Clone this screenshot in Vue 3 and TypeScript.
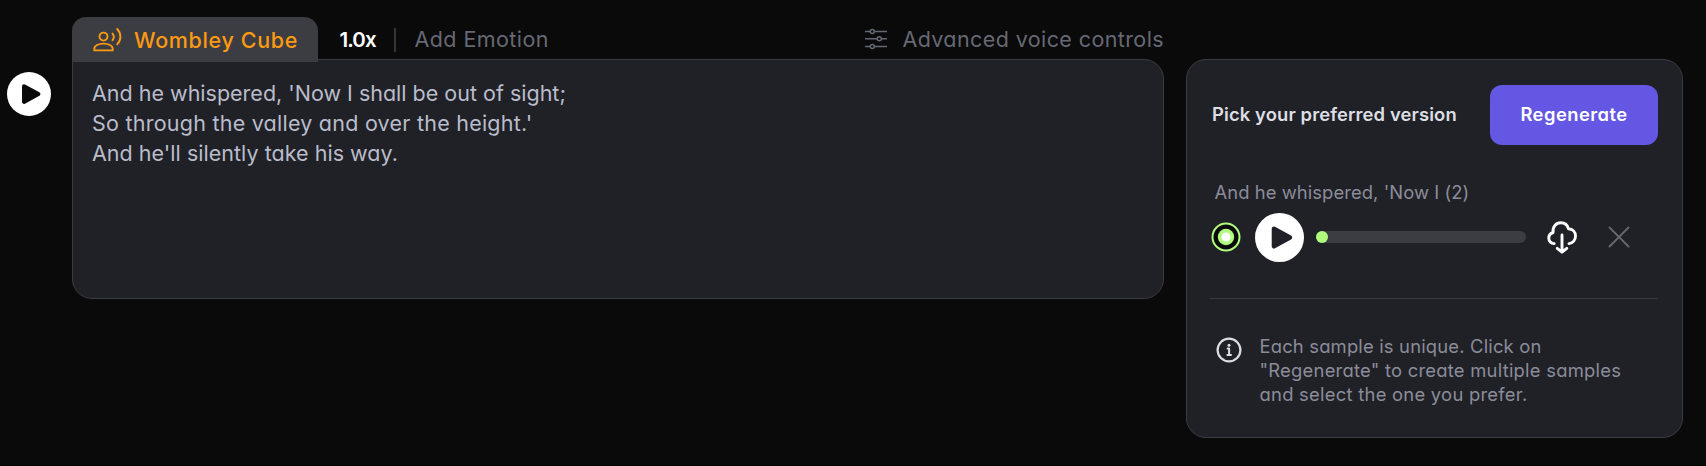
<script setup lang="ts">
interface Line {
  text: string
  cls: string
}

const script: Line[] = [
  { text: "And he whispered, 'Now I shall be out of sight;", cls: 'fit-a' },
  { text: "So through the valley and over the height.'", cls: 'fit-b' },
  { text: "And he'll silently take his way.", cls: 'fit-c' },
]

const hint: Line[] = [
  { text: 'Each sample is unique. Click on', cls: 'fit-d' },
  { text: '"Regenerate" to create multiple samples', cls: 'fit-e' },
  { text: 'and select the one you prefer.', cls: 'fit-f' },
]
</script>

<template>
  <main class="page">
    <button class="play play-main" aria-label="Play">
      <svg viewBox="0 0 44 44">
        <circle cx="22" cy="22" r="22" fill="#fff" />
        <path d="M17 14.2 31.4 22 17 29.9Z" fill="#0a0a0a" stroke="#0a0a0a" stroke-width="4" stroke-linejoin="round" />
      </svg>
    </button>

    <section class="editor">
      <header class="toolbar">
        <button class="tab">
          <svg class="voice" viewBox="0 0 30 28" fill="none" stroke="currentColor" stroke-width="1.9" stroke-linecap="round" stroke-linejoin="round">
            <circle cx="11.5" cy="10.6" r="4" />
            <path d="M2.3 24.4v-1.6c0-3.2 4.2-5.2 9.2-5.2s9.2 2 9.2 5.2v1.6z" />
            <path d="M20.5 7.6q2.7 3.3 0 6.6M25.2 3c4.3 4.5 4.3 10.8 0 15.3" />
          </svg>
          <span>Wombley Cube</span>
        </button>
        <span class="speed">1.0x</span>
        <span class="bar"></span>
        <span class="emotion">Add Emotion</span>
        <span class="advanced">
          <svg class="sliders" viewBox="0 0 26 26" fill="none" stroke="currentColor" stroke-width="1.5">
            <path d="M2 5.5h5.3M11.3 5.5H24M2 12.8h12.3M18.3 12.8H24M2 20.4h5.3M11.3 20.4H24" />
            <circle cx="9.3" cy="5.5" r="2" />
            <circle cx="16.3" cy="12.8" r="2" />
            <circle cx="9.3" cy="20.4" r="2" />
          </svg>
          <span>Advanced voice controls</span>
        </span>
      </header>
      <div class="textbox">
        <div v-for="line in script" :key="line.cls"><span :class="line.cls">{{ line.text }}</span></div>
      </div>
    </section>

    <aside class="panel">
      <div class="head">
        <span class="title">Pick your preferred version</span>
        <button class="regen">Regenerate</button>
      </div>
      <div class="name">And he whispered, 'Now I (2)</div>
      <div class="player">
        <svg class="radio" viewBox="0 0 30 30">
          <circle cx="15" cy="15" r="13.5" fill="#0a0a0a" stroke="#b0fb7d" stroke-width="2" />
          <circle cx="15" cy="15" r="8.2" fill="#b0fb7d" />
          <circle cx="15" cy="15" r="4.5" fill="#fff" />
        </svg>
        <button class="play play-sample" aria-label="Play sample">
          <svg viewBox="0 0 44 44">
            <circle cx="22" cy="22" r="22" fill="#fff" />
            <path d="M17 14.2 31.4 22 17 29.9Z" fill="#202126" stroke="#202126" stroke-width="4" stroke-linejoin="round" />
          </svg>
        </button>
        <div class="track"><div class="knob"></div></div>
        <svg class="cloud" viewBox="0 0 34 36" fill="none" stroke="#fff" stroke-width="2.9" stroke-linecap="round" stroke-linejoin="round">
          <path d="M9.2 24.6C6 24.8 3.8 22 3.8 19.2c0-2.8 1.7-4.9 4.3-5.7C7.2 8 11 3.8 15.8 3.8c4 0 6.8 2.4 7.6 6 4.4.2 7.1 3.2 7.1 7.2 0 4-2.5 7.2-6.5 7.6" />
          <path d="M17 16v17M12.2 29.3 17 33.2l4.8-3.9" />
        </svg>
        <svg class="close" viewBox="0 0 22 22" fill="none" stroke="#666872" stroke-width="1.8" stroke-linecap="round">
          <path d="M1.5 1.5l19 19M20.5 1.5l-19 19" />
        </svg>
      </div>
      <div class="hint">
        <svg class="info" viewBox="0 0 26 26" fill="none" stroke="#dcdde2" stroke-linecap="round" stroke-linejoin="round">
          <circle cx="13" cy="13" r="11.4" stroke-width="2.2" />
          <path d="M11.6 11.6h1.5v6.2M11.4 18h3.6" stroke-width="2" />
          <circle cx="13" cy="8.3" r="1.5" fill="#dcdde2" stroke="none" />
        </svg>
        <div>
          <div v-for="line in hint" :key="line.cls"><span :class="line.cls">{{ line.text }}</span></div>
        </div>
      </div>
    </aside>
  </main>
</template>

<style scoped>
.page {
  box-sizing: border-box;
  width: 1706px;
  height: 466px;
  padding-left: 7px;
  display: flex;
  align-items: flex-start;
  background: #0a0a0a;
  border-bottom: 1px solid #000;
  font-family: Inter, "Open Sans", sans-serif;
  font-feature-settings: "cv11";
  font-size: 21.5px;
  white-space: nowrap;
  overflow: hidden;
}
button {
  border: 0;
  padding: 0;
  background: none;
  font: inherit;
  font-feature-settings: inherit;
  color: inherit;
}
svg { display: block; flex: none; }
.play { flex: none; }
.play svg { width: 100%; height: 100%; }
.play-main { width: 44px; height: 44px; margin-top: 72px; }

.editor { width: 1092px; margin: 17px 0 0 21px; }
.toolbar {
  display: flex;
  align-items: center;
  height: 42px;
  color: #666973;
}
.toolbar > span:not(.bar) { padding-top: 2px; }
.tab {
  position: relative;
  z-index: 1;
  box-sizing: border-box;
  display: flex;
  align-items: center;
  align-self: flex-start;
  width: 245.5px;
  height: 45px;
  padding-left: 20px;
  border-radius: 14px 14px 0 0;
  background: #3b3d43;
  color: #fd9a10;
  font-weight: 500;
  letter-spacing: 0.65px;
}
.voice { width: 30px; height: 28px; margin-right: 12px; }
.speed {
  width: 37px;
  margin-left: 22px;
  color: #fff;
  font-size: 20.5px;
  font-weight: 600;
  letter-spacing: -0.9px;
}
.bar { width: 2px; height: 24px; margin: 3px 0 0 17.5px; background: #34363b; }
.emotion { margin-left: 18.5px; letter-spacing: 0.42px; }
.advanced { display: flex; align-items: center; margin-left: auto; letter-spacing: 0.4px; }
.sliders { width: 26px; height: 26px; margin-right: 13.5px; }

.textbox {
  box-sizing: border-box;
  height: 240px;
  padding: 18px 19px;
  border: 1px solid #3b3c42;
  border-radius: 20px;
  border-top-left-radius: 0;
  background: #202126;
  color: #b9bccb;
  line-height: 30px;
}
.fit-a { letter-spacing: 0; }
.fit-b { letter-spacing: 0.24px; }
.fit-c { letter-spacing: 0.03px; }
.fit-d { letter-spacing: 0.18px; }
.fit-e { letter-spacing: 0.24px; }
.fit-f { letter-spacing: 0.26px; }

.panel {
  box-sizing: border-box;
  width: 497px;
  height: 379px;
  margin: 59px 0 0 22px;
  padding: 25px 24px 0 23px;
  border: 1px solid #3b3c42;
  border-radius: 20px;
  background: #202126;
  font-size: 18.4px;
}
.head { display: flex; align-items: center; justify-content: space-between; height: 60px; }
.title { margin: -2px 0 0 2px; color: #dcdee3; font-weight: 600; letter-spacing: 0.12px; }
.regen {
  width: 168px;
  height: 60px;
  padding-bottom: 2px;
  border-radius: 12px;
  background: #6457e3;
  color: #fff;
  font-weight: 600;
  letter-spacing: 0.45px;
}
.name {
  margin: 34.5px 0 1px 4.5px;
  color: #8b8c9a;
  line-height: 24px;
  letter-spacing: 0.07px;
}
.player {
  display: flex;
  align-items: center;
  height: 64px;
  padding-bottom: 29px;
  border-bottom: 1px solid #393a40;
}
.radio { width: 30px; height: 30px; margin-left: 0.5px; }
.play-sample { width: 49px; height: 49px; margin: 2px 11.5px 0 14.5px; }
.track { width: 210px; height: 12px; border-radius: 6px; background: #3b3d43; }
.knob { width: 12px; height: 12px; border-radius: 50%; background: #b0fb7d; }
.cloud { width: 34px; height: 36px; margin-left: 19px; }
.close { width: 22px; height: 22px; margin-left: 29px; }
.hint {
  display: flex;
  margin-top: 35px;
  padding-left: 5.5px;
  color: #8b8c9a;
  line-height: 24px;
}
.info { width: 26px; height: 26px; margin: 3.5px 18px 0 0; }
</style>

<style>
body { background: #0a0a0a; }
</style>
